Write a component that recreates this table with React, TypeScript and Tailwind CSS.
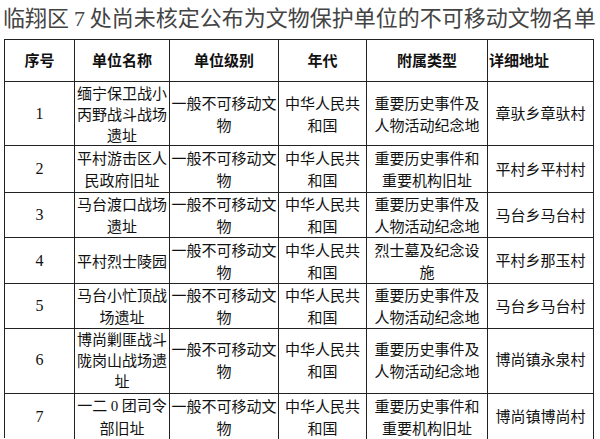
const rows = [
  { no: '1', name: ['缅宁保卫战小', '丙野战斗战场', '遗址'], type: ['重要历史事件及', '人物活动纪念地'], addr: '章驮乡章驮村', h: 'h-[64px]' },
  { no: '2', name: ['平村游击区人', '民政府旧址'], type: ['重要历史事件和', '重要机构旧址'], addr: '平村乡平村村', h: 'h-[47px]' },
  { no: '3', name: ['马台渡口战场', '遗址'], type: ['重要历史事件及', '人物活动纪念地'], addr: '马台乡马台村', h: 'h-[45px]' },
  { no: '4', name: ['平村烈士陵园'], type: ['烈士墓及纪念设', '施'], addr: '平村乡那玉村', h: 'h-[46px]' },
  { no: '5', name: ['马台小忙顶战', '场遗址'], type: ['重要历史事件及', '人物活动纪念地'], addr: '马台乡马台村', h: 'h-[42px]' },
  { no: '6', name: ['博尚剿匪战斗', '陇岗山战场遗', '址'], type: ['重要历史事件及', '人物活动纪念地'], addr: '博尚镇永泉村', h: 'h-[68px]' },
  { no: '7', name: ['一二 0 团司令', '部旧址'], type: ['重要历史事件和', '重要机构旧址'], addr: '博尚镇博尚村', h: 'h-[44px]' },
]

const cols = 'grid grid-cols-[70px_95px_109px_88px_121px_106px]'
const cell = 'flex flex-col items-center justify-center border-r border-b border-[#222] text-center'

function Lines({ lines }: { lines: string[] }) {
  const leading = lines.length > 2 ? 'leading-[21px]' : 'leading-[22px]'
  return (
    <>
      {lines.map((line, i) => (
        <div key={i} className={`whitespace-nowrap ${leading}`}>
          {line.includes(' 0 ') ? (
            <>
              {line.split(' 0 ')[0]} <span className="font-['Liberation_Serif',serif]">0</span> {line.split(' 0 ')[1]}
            </>
          ) : (
            line
          )}
        </div>
      ))}
    </>
  )
}

export default function App() {
  return (
    <div className="h-[439px] w-[600px] overflow-hidden bg-white font-['Noto_Sans_CJK_SC',sans-serif] text-[#111]">
      <div className="h-[39px] whitespace-nowrap pl-[3px] pt-[1px] text-[22px] leading-[30px] text-[#444]">
        临翔区 <span className="font-['Liberation_Serif',serif]">7</span> 处尚未核定公布为文物保护单位的不可移动文物名单
      </div>
      <div className="ml-[4px] w-[590px] border-l border-t border-[#222] text-[15px]">
        <div className={`${cols} h-[42px] font-bold`}>
          <div className={cell}>序号</div>
          <div className={cell}>单位名称</div>
          <div className={cell}>单位级别</div>
          <div className={cell}>年代</div>
          <div className={cell}>附属类型</div>
          <div className="flex items-center border-r border-b border-[#222] pl-[1px]">详细地址</div>
        </div>
        {rows.map((row) => (
          <div key={row.no} className={`${cols} ${row.h}`}>
            <div className={`${cell} font-['Liberation_Serif',serif] text-[16px]`}>{row.no}</div>
            <div className={cell}>
              <Lines lines={row.name} />
            </div>
            <div className={cell}>
              <Lines lines={['一般不可移动文', '物']} />
            </div>
            <div className={cell}>
              <Lines lines={['中华人民共', '和国']} />
            </div>
            <div className={cell}>
              <Lines lines={row.type} />
            </div>
            <div className={cell}>{row.addr}</div>
          </div>
        ))}
      </div>
    </div>
  )
}
